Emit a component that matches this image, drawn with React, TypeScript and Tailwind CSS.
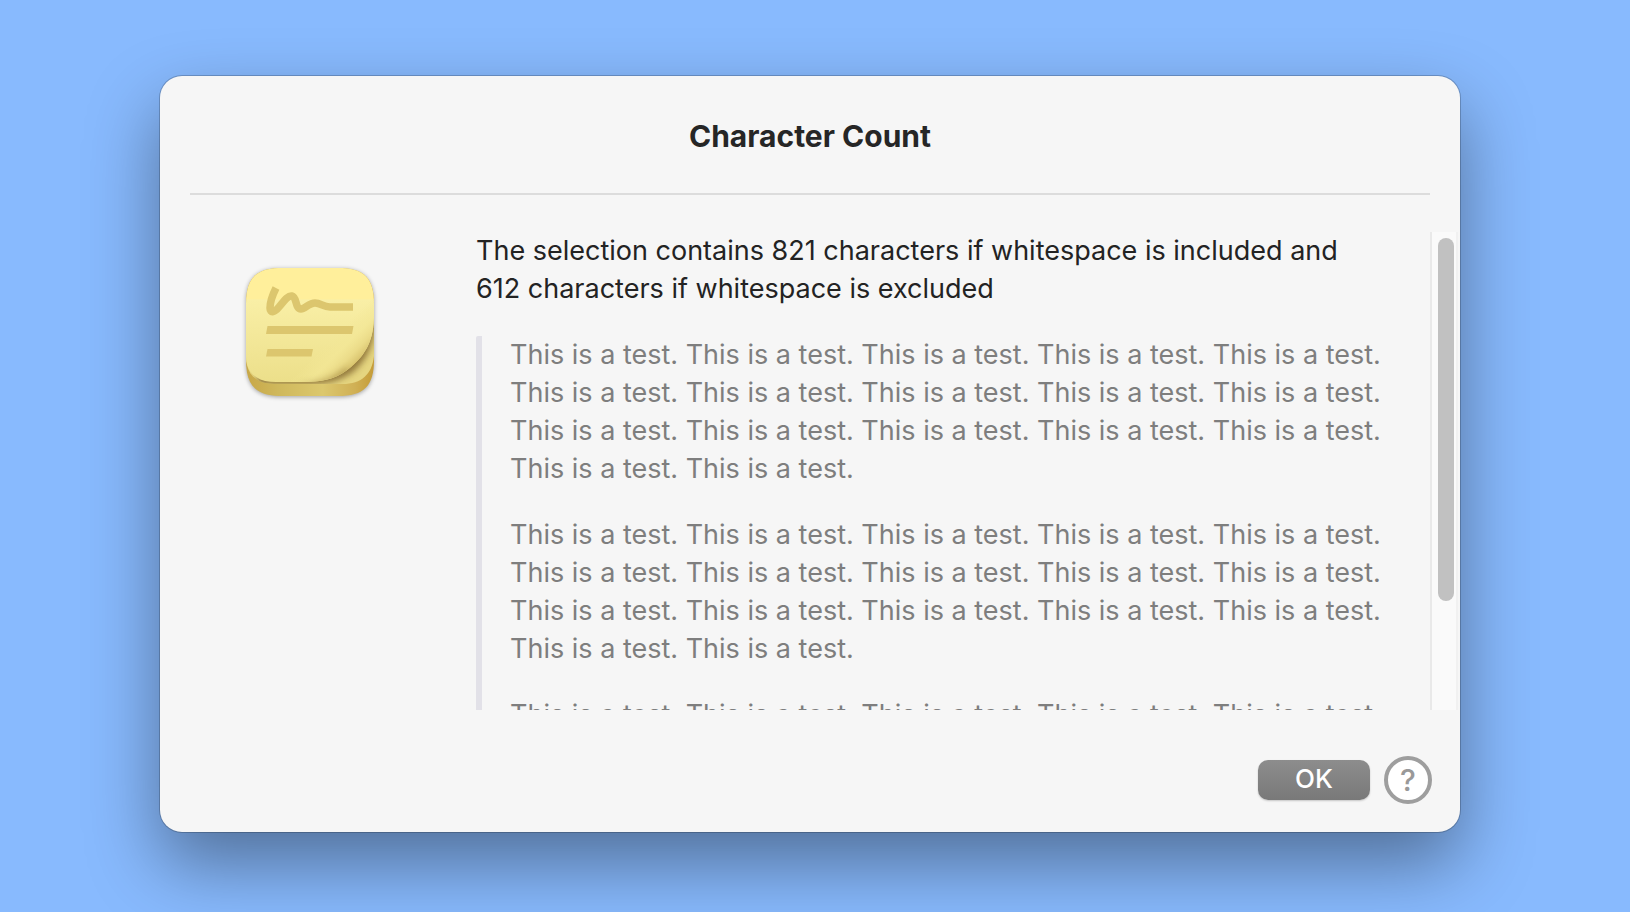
import { useState, type UIEvent } from "react";

const sentence = "This is a test.";
const paragraph = Array(17).fill(sentence).join(" ");
const paragraphs = [paragraph, paragraph, paragraph];

function StickiesIcon() {
  return (
    <svg viewBox="0 0 128 128" className="size-32 overflow-visible drop-shadow-[0_1px_2px_rgba(0,0,0,0.35)]" role="img" aria-label="Stickies">
      <defs>
        <linearGradient id="base" x1="0" x2="1" y1="0" y2="0">
          <stop offset="0" stopColor="#c8a747" />
          <stop offset="0.25" stopColor="#cfb85c" />
          <stop offset="0.6" stopColor="#dcc86e" />
          <stop offset="0.85" stopColor="#d0b055" />
          <stop offset="1" stopColor="#c59c37" />
        </linearGradient>
        <linearGradient id="sheet" x1="0" x2="0" y1="0" y2="1">
          <stop offset="0" stopColor="#ffef9b" />
          <stop offset="0.27" stopColor="#ffef9b" />
          <stop offset="0.28" stopColor="#f9efa6" />
          <stop offset="1" stopColor="#ecdf8a" />
        </linearGradient>
        <linearGradient id="curl" gradientUnits="userSpaceOnUse" x1="80" y1="76" x2="106" y2="102">
          <stop offset="0" stopColor="#f3e796" stopOpacity="0" />
          <stop offset="0.4" stopColor="#f3e796" stopOpacity="0.7" />
          <stop offset="0.7" stopColor="#ebdb88" />
          <stop offset="0.9" stopColor="#dcc873" />
          <stop offset="1" stopColor="#c79f3c" />
        </linearGradient>
        <clipPath id="pad">
          <path d="M0 0H128V88C126 106 116 116 96 116H28C10 116 0 106 0 88Z" />
        </clipPath>
        <clipPath id="front">
          <path d="M36 0H92C118 0 128 10 128 36V46C128 72 120 86 105 99C93 109 82 113 62 114H30C10 114 0 104 0 88V36C0 10 10 0 36 0Z" />
        </clipPath>
        <filter id="soft" x="-20%" y="-20%" width="140%" height="140%">
          <feGaussianBlur stdDeviation="3" />
        </filter>
      </defs>
      <path d="M36 0H92C118 0 128 10 128 36V92C128 118 118 128 92 128H36C10 128 0 118 0 92V36C0 10 10 0 36 0Z" fill="url(#base)" />
      <g clipPath="url(#pad)">
        <path d="M0 40H128V116H0Z" fill="#e5d580" />
        <path d="M129 46C129 76 122 90 108 103C96 112 84 116 62 116H12V80H90Z" fill="#7d602b" opacity="0.8" filter="url(#soft)" />
      </g>
      <g clipPath="url(#front)">
        <path d="M0 0H128V114H0Z" fill="url(#sheet)" />
        <path d="M0 31H128V114H0Z" fill="url(#curl)" />
        <path d="M52 116C72 114 86 110 100 99L106 108L80 122Z" fill="#a88f45" opacity="0.55" filter="url(#soft)" />
      </g>
      <path d="M30 20C26 28 24 35 24 40C24 46 29 44 33 39C38 33 42 27 46 28C51 29 49 41 55 41C59 41 63 35 69 35C75 35 77 39 84 39H107" fill="none" stroke="#dcc66e" strokeWidth="7.5" strokeLinejoin="round" />
      <path d="M21.500 58H107.500L106 66H20Z" fill="#dcc66e" />
      <path d="M21.500 81H67L65.500 88.500H20Z" fill="#dcc66e" />
    </svg>
  );
}

function ScrollPane() {
  const [offset, setOffset] = useState(0);

  const onScroll = (e: UIEvent<HTMLDivElement>) => {
    const el = e.currentTarget;
    setOffset(el.scrollTop / el.scrollHeight);
  };

  return (
    <div className="flex h-[478px] min-w-0 flex-1">
      <div onScroll={onScroll} className="min-w-0 flex-1 overflow-y-scroll pr-7 text-[27px] leading-[38px] [scrollbar-width:none]">
        <p className="pr-8 text-[#232323]">
          The selection contains 821 characters if whitespace is included and 612 characters if whitespace is excluded
        </p>
        <blockquote className="mt-7 space-y-7 rounded-t-xs border-l-6 border-[#e2e1e8] pl-7 text-[#7e7e7e]">
          {paragraphs.map((text, i) => (
            <p key={i}>{text}</p>
          ))}
        </blockquote>
      </div>
      <div className="w-7 border-x-2 border-[#e9e9e9] border-r-[#f1f1f1] bg-[#fafafa] px-1.5 py-1.5">
        <div className="flow-root h-full">
          <div className="h-[78%] w-4 rounded-full bg-[#c1c1c1]" style={{ marginTop: offset * 466 }} />
        </div>
      </div>
    </div>
  );
}

export default function App() {
  return (
    <main className="min-h-screen overflow-hidden bg-[#88bafe] pt-19 pr-[170px] pb-20 pl-40 font-[Inter,sans-serif]">
      <section
        role="dialog"
        aria-labelledby="dialog-title"
        className="rounded-[22px] bg-[#f6f6f6] shadow-[0_0_0_1px_rgba(0,0,0,0.2),0_32px_72px_rgba(0,0,0,0.4)]"
      >
        <header className="mx-[30px] border-b-2 border-[#dcdcdc] pt-10 pb-[37px]">
          <h1 id="dialog-title" className="text-center text-[30px] leading-10 font-bold text-[#262626]">
            Character Count
          </h1>
        </header>
        <div className="flex pt-[37px] pr-0.5">
          <div className="w-[316px] shrink-0 pt-9 pl-[86px]">
            <StickiesIcon />
          </div>
          <ScrollPane />
        </div>
        <footer className="flex items-center justify-end gap-3.5 pt-[46px] pr-7 pb-7">
          <button className="h-10 w-28 rounded-[10px] bg-linear-to-b from-[#8d8d8d] to-[#797979] pb-0.5 text-[26px] leading-[38px] font-medium text-white shadow-[0_1px_2px_rgba(0,0,0,0.2)]">
            OK
          </button>
          <button aria-label="Help" className="flex size-12 items-center justify-center rounded-full border-4 border-[#9e9e9e] bg-white text-[30px] leading-10 font-medium text-[#999999]">
            ?
          </button>
        </footer>
      </section>
    </main>
  );
}
